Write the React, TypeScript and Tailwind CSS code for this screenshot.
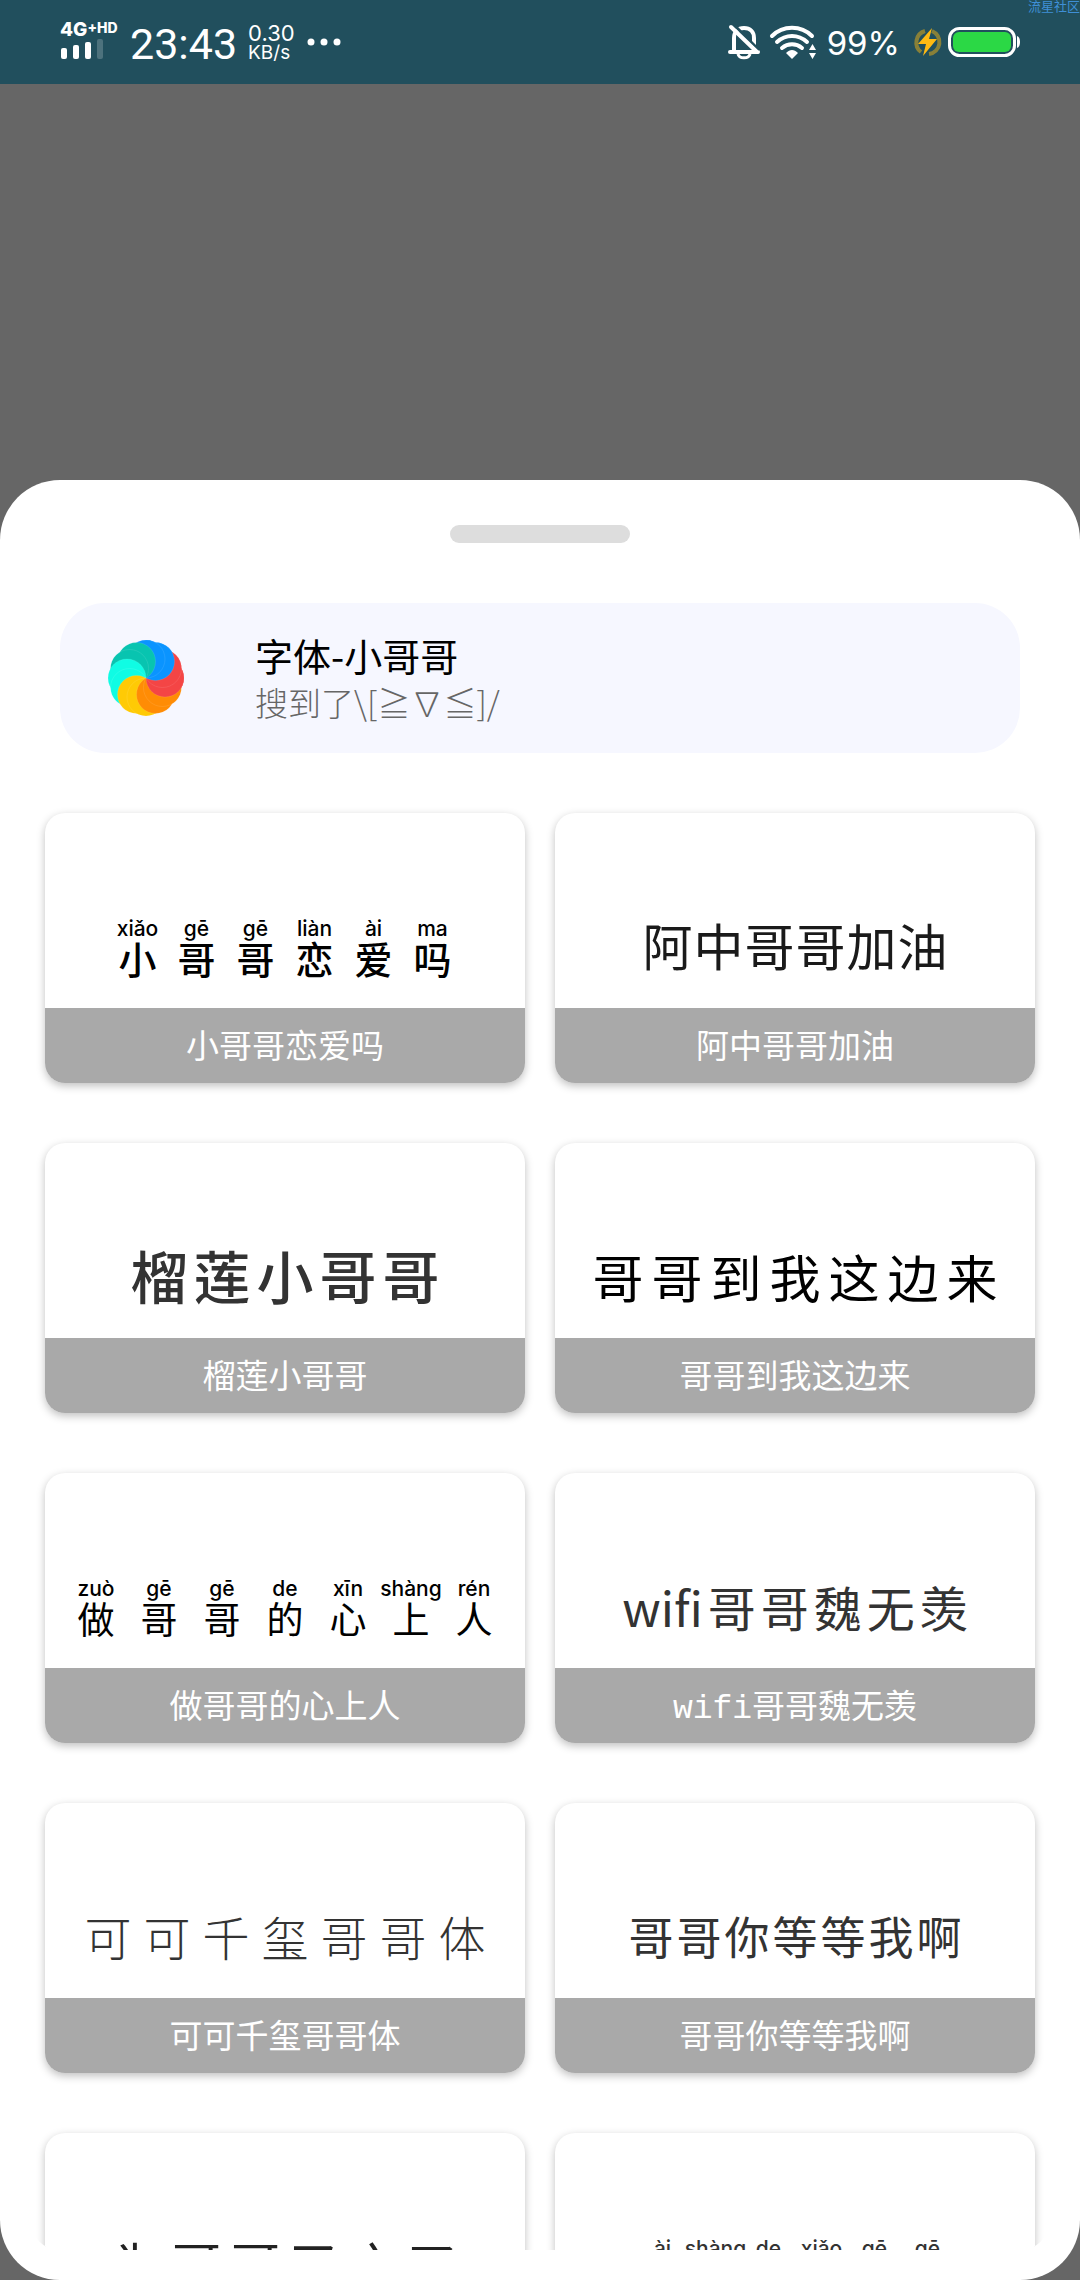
import clsx from "clsx";

const CJK = "font-['Noto_Sans_CJK_SC',sans-serif]";
const STATUS_FONT = "font-['Inter','Noto_Sans_CJK_SC',sans-serif]";

interface FontItem {
  name: string;
  glyphs: string[];
  pinyin?: string[];
  className: string;
}

const fonts: FontItem[] = [
  {
    name: "小哥哥恋爱吗",
    glyphs: ["小", "哥", "哥", "恋", "爱", "吗"],
    pinyin: ["xiǎo", "gē", "gē", "liàn", "ài", "ma"],
    className: "grid-cols-[repeat(6,59px)] text-[38px] font-medium text-black",
  },
  {
    name: "阿中哥哥加油",
    glyphs: ["阿", "中", "哥", "哥", "加", "油"],
    className: "gap-[1px] pb-[4px] text-[50px] text-[#1a1a1a]",
  },
  {
    name: "榴莲小哥哥",
    glyphs: ["榴", "莲", "小", "哥", "哥"],
    className: "gap-[6px] pb-[4px] text-[57px] font-medium text-[#333]",
  },
  {
    name: "哥哥到我这边来",
    glyphs: ["哥", "哥", "到", "我", "这", "边", "来"],
    className: "gap-[8px] text-[51px] text-black",
  },
  {
    name: "做哥哥的心上人",
    glyphs: ["做", "哥", "哥", "的", "心", "上", "人"],
    pinyin: ["zuò", "gē", "gē", "de", "xīn", "shàng", "rén"],
    className: "grid-cols-[repeat(7,63px)] text-[37px] text-black",
  },
  {
    name: "wifi哥哥魏无羡",
    glyphs: ["wifi", "哥", "哥", "魏", "无", "羡"],
    className: "gap-[5px] text-[48px] text-[#333]",
  },
  {
    name: "可可千玺哥哥体",
    glyphs: ["可", "可", "千", "玺", "哥", "哥", "体"],
    className: "gap-[12px] text-[47px] font-light text-[#333]",
  },
  {
    name: "哥哥你等等我啊",
    glyphs: ["哥", "哥", "你", "等", "等", "我", "啊"],
    className: "gap-[3px] text-[45px] text-[#333]",
  },
  {
    name: "为哥哥又之了",
    glyphs: ["为", "哥", "哥", "又", "之", "了"],
    className: "gap-[8px] pb-[4px] text-[51px] text-[#222]",
  },
  {
    name: "爱上的小哥哥",
    glyphs: ["爱", "上", "的", "小", "哥", "哥"],
    pinyin: ["ài", "shàng", "de", "xiǎo", "gē", "gē"],
    className: "grid-cols-[repeat(6,53px)] text-[37px] text-[#333]",
  },
];

const blades = [
  "#f44545", "#f44545",
  "#0a94ff", "#0a94ff",
  "#08c4b0", "#08c4b0",
  "#10fce4", "#10fce4",
  "#ffca05", "#ffca05",
  "#ff8c05", "#ff8c05",
];

function Blade({ index }: { index: number }) {
  const angle = (index * 30 * Math.PI) / 180;
  return (
    <circle
      cx={19 * Math.cos(angle)}
      cy={-19 * Math.sin(angle)}
      r="19"
      fill={blades[index]}
      stroke="#fff"
      strokeOpacity="0.2"
      strokeWidth="0.5"
    />
  );
}

function PinwheelLogo() {
  return (
    <svg viewBox="-38 -38 76 76" className="size-[76px]" aria-hidden="true">
      <clipPath id="seam">
        <rect x="0" y="-38" width="38" height="76" />
      </clipPath>
      {blades.map((_, i) => (
        <Blade key={i} index={i} />
      ))}
      {/* the first blades go over the last ones so the wheel closes */}
      <g clipPath="url(#seam)">
        {[0, 1, 2, 3, 4, 5].map((i) => (
          <Blade key={i} index={i} />
        ))}
      </g>
    </svg>
  );
}

function StatusBar() {
  return (
    <header
      className={clsx(
        "relative flex h-[84px] shrink-0 items-center justify-between bg-[#214f5d] px-[60px] text-white",
        STATUS_FONT
      )}
    >
      <div className="flex items-center">
        <div className="flex w-[60px] flex-col gap-[1px] pb-[4px]">
          <div className="flex items-start font-extrabold">
            <span className="text-[19px] leading-[16px]">4G</span>
            <span className="text-[14px] leading-[11px]">+HD</span>
          </div>
          <svg viewBox="0 0 44 20" className="h-[20px] w-[44px]" fill="#fff" aria-hidden="true">
            <rect x="1" y="9" width="6" height="11" rx="2" />
            <rect x="13" y="6" width="6" height="14" rx="2" />
            <rect x="25" y="3" width="6" height="17" rx="2" />
            <rect x="37" y="0" width="6" height="20" rx="2" opacity="0.2" />
          </svg>
        </div>
        <span className="ml-[10px] pt-[4px] font-['Roboto',sans-serif] text-[43px] leading-[48px]">
          23:43
        </span>
        <div className="ml-[11px] flex flex-col pt-[2px] leading-[20px]">
          <span className="text-[22px]">0.30</span>
          <span className="text-[19px]">KB/s</span>
        </div>
        <svg viewBox="0 0 34 8" className="ml-[12px] h-[8px] w-[34px]" fill="#fff" aria-hidden="true">
          <circle cx="4" cy="4" r="3.5" />
          <circle cx="17" cy="4" r="3.5" />
          <circle cx="30" cy="4" r="3.5" />
        </svg>
      </div>

      <div className="flex items-center">
        <svg viewBox="0 0 32 36" className="h-[36px] w-[32px]" fill="none" stroke="#fff" strokeWidth="4" aria-hidden="true">
          <path d="M6 27V14C6 8 10 4 16 4s10 4 10 10v13" />
          <path d="M2 28h28" strokeLinecap="round" />
          <path d="M10 30c1 5 11 5 12 0" strokeWidth="3" />
          <path d="M5 0l26 26" stroke="#214f5d" strokeWidth="3" />
          <path d="M3 3l26 25" strokeLinecap="round" />
        </svg>
        <svg viewBox="0 0 48 36" className="ml-[9px] h-[36px] w-[48px]" fill="none" stroke="#fff" strokeWidth="4" strokeLinecap="round" aria-hidden="true">
          <path d="M3 12C14 1 32 1 43 12" />
          <path d="M8 18c9-8 21-8 30 0" />
          <path d="M13 24c6-5 14-5 20 0" />
          <path d="M23 35l-6-6c4-4 8-4 12 0z" fill="#fff" stroke="none" />
          <path d="M40 26l3.500-6 3.500 6zM40 29l3.500 6 3.500-6z" fill="#fff" stroke="none" />
        </svg>
        <span className="ml-[10px] pt-[2px] text-[33px] leading-[40px]">99%</span>
        <svg viewBox="0 0 30 30" className="ml-[12px] h-[30px] w-[30px]" aria-hidden="true">
          <path d="M13 4A12 12 0 0 0 9 25" fill="none" stroke="#b5952a" strokeOpacity="0.7" strokeWidth="4" />
          <path d="M20 4A12 12 0 0 1 17 27" fill="none" stroke="#b5952a" strokeOpacity="0.7" strokeWidth="4" />
          <path d="M20 1L6 17h8l-3 12 14-17h-8z" fill="#ffba12" />
        </svg>
        <svg viewBox="0 0 72 30" className="ml-[6px] h-[30px] w-[72px]" aria-hidden="true">
          <rect x="1.500" y="1.500" width="65" height="27" rx="10" fill="none" stroke="#fff" strokeWidth="3" />
          <rect x="5" y="5" width="58" height="20" rx="6" fill="#2bd845" />
          <path d="M69 9q3 1 3 6t-3 6z" fill="#fff" />
        </svg>
      </div>
      <span className="absolute top-0 right-0 text-[13px] leading-[13px] text-[#3f8fd6]">
        流星社区
      </span>
    </header>
  );
}

function Sample({ font }: { font: FontItem }) {
  if (font.pinyin) {
    return (
      <span className={clsx("grid justify-items-center pt-[4px] leading-[38px]", font.className)}>
        {font.glyphs.map((glyph, i) => (
          <span key={i} className="flex flex-col items-center">
            <span className="font-['Inter',sans-serif] text-[21px] leading-[20px] font-medium">
              {font.pinyin?.[i]}
            </span>
            <span>{glyph}</span>
          </span>
        ))}
      </span>
    );
  }
  return (
    <span className={clsx("flex leading-[60px]", font.className)}>
      {font.glyphs.map((glyph, i) => (
        <span key={i}>{glyph}</span>
      ))}
    </span>
  );
}

function FontCard({ font }: { font: FontItem }) {
  return (
    <button
      type="button"
      className="relative flex h-[270px] items-center justify-center overflow-hidden rounded-[20px] bg-white pb-[4px] shadow-[0_3px_8px_rgba(0,0,0,0.25)]"
    >
      <Sample font={font} />
      <span className="absolute inset-x-0 bottom-0 flex h-[75px] items-center justify-center bg-[#a9a9a9] pt-[8px] font-['Liberation_Mono','Noto_Sans_CJK_SC',monospace] text-[33px] text-white">
        {font.name}
      </span>
    </button>
  );
}

export default function App() {
  return (
    <div className={clsx("flex h-screen w-full flex-col bg-[#666]", CJK)}>
      <StatusBar />

      <main className="mt-[396px] flex min-h-0 flex-1 flex-col rounded-[60px] bg-white px-[30px] pt-[45px] pb-[30px]">
        <div className="h-[18px] w-[180px] shrink-0 self-center rounded-full bg-[#ddd]" />

        <section className="mx-[30px] mt-[60px] flex h-[150px] shrink-0 items-center gap-[71px] rounded-[45px] bg-[#f6f7ff] px-[48px]">
          <PinwheelLogo />
          <div className="flex flex-col">
            <h1 className="text-[38px] leading-[48px] text-black">字体-小哥哥</h1>
            <p className="text-[33px] leading-[46px] font-light text-[#666]">
              搜到了\[≧∇≦]/
            </p>
          </div>
        </section>

        <div className="mt-[45px] grid min-h-0 flex-1 auto-rows-max grid-cols-2 gap-x-[30px] gap-y-[60px] overflow-hidden rounded-b-[30px] px-[15px] pt-[15px]">
          {fonts.map((font) => (
            <FontCard key={font.name} font={font} />
          ))}
        </div>
      </main>
    </div>
  );
}
